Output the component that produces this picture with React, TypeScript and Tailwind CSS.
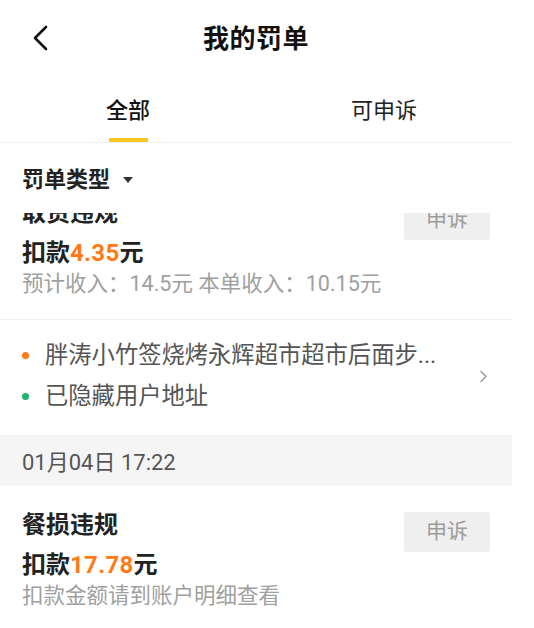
import React from "react";

function Card({ title, amount, sub, offset }: { title: string; amount: string; sub: string; offset?: boolean }) {
  return (
    <div className={`flex justify-between pl-[22px] pr-[22px] pt-[24px] pb-[24px] border-b border-[#f0f0f0] ${offset ? "mt-[-39px]" : ""}`}>
      <div className="flex flex-col">
        <div className="text-[24px] leading-[30px] font-bold text-[#222]">{title}</div>
        <div className="mt-[6px] text-[24px] leading-[38px] font-bold text-[#222]">
          扣款<span className="text-[#ff7a14] tracking-[0.3px]">{amount}</span>元
        </div>
        <div className="text-[21.5px] leading-[23px] text-[#a0a0a0]">{sub}</div>
      </div>
      <div className="mt-[2px] w-[86px] h-[40px] rounded-[3px] bg-[#efefef] flex items-center justify-center text-[21px] text-[#9c9c9c]">
        申诉
      </div>
    </div>
  );
}

export default function App() {
  return (
    <div className="w-[512px] h-[628px] overflow-hidden bg-white font-['Roboto','Noto_Sans_CJK_SC',sans-serif]">
      {/* header */}
      <div className="relative h-[77px] flex items-center justify-center">
        <svg className="absolute left-[31px] top-[25px]" width="19" height="26" viewBox="0 0 19 26">
          <path d="M15 2 L4 13 L15 24" fill="none" stroke="#111" strokeWidth="2.6" strokeLinecap="round" strokeLinejoin="round" />
        </svg>
        <div className="text-[26px] leading-[34px] font-bold text-[#111] tracking-[0.5px]">我的罚单</div>
      </div>
      {/* tabs */}
      <div className="h-[66px] flex border-b border-[#f0f0f0]">
        <div className="flex-1 flex flex-col items-center pt-[19px]">
          <div className="text-[22px] leading-[30px] font-medium text-[#111]">全部</div>
          <div className="mt-[12px] w-[39px] h-[4px] rounded-[1px] bg-[#f9c41d]" />
        </div>
        <div className="flex-1 flex flex-col items-center pt-[19px]">
          <div className="text-[22px] leading-[30px] text-[#222]">可申诉</div>
        </div>
      </div>
      {/* filter */}
      <div className="relative z-10 bg-white h-[70px] pt-[22px] pl-[22px] flex items-start">
        <div className="flex items-center h-[29px]">
          <span className="text-[22px] leading-[29px] font-bold text-[#222]">罚单类型</span>
          <svg className="ml-[13px]" width="10" height="6" viewBox="0 0 10 6">
            <path d="M0 0 L10 0 L5 6 Z" fill="#333" />
          </svg>
        </div>
      </div>
      {/* list */}
      <div className="overflow-hidden">
        <Card title="取货违规" amount="4.35" sub="预计收入：14.5元 本单收入：10.15元" offset />
        <div className="flex items-center pl-[22px] pr-[24px] pt-[15px] pb-[18px]">
          <div className="flex-1 flex flex-col">
            <div className="flex items-center h-[41px]">
              <span className="w-[7px] h-[7px] rounded-full bg-[#ff7a1a] mr-[16px]" />
              <span className="text-[23.3px] leading-[41px] text-[#555]">胖涛小竹签烧烤永辉超市超市后面步...</span>
            </div>
            <div className="flex items-center h-[41px]">
              <span className="w-[7px] h-[7px] rounded-full bg-[#1fb36e] mr-[16px]" />
              <span className="text-[23.3px] leading-[41px] text-[#555]">已隐藏用户地址</span>
            </div>
          </div>
          <svg width="9" height="13" viewBox="0 0 9 13">
            <path d="M2 1.5 L7 6.5 L2 11.5" fill="none" stroke="#9a9a9a" strokeWidth="1.5" strokeLinecap="round" strokeLinejoin="round" />
          </svg>
        </div>
        <div className="h-[51px] bg-[#f5f5f5] flex items-center pl-[22px] pt-[4px]">
          <span className="text-[22px] text-[#555]">01月04日 17:22</span>
        </div>
        <Card title="餐损违规" amount="17.78" sub="扣款金额请到账户明细查看" />
      </div>
    </div>
  );
}
